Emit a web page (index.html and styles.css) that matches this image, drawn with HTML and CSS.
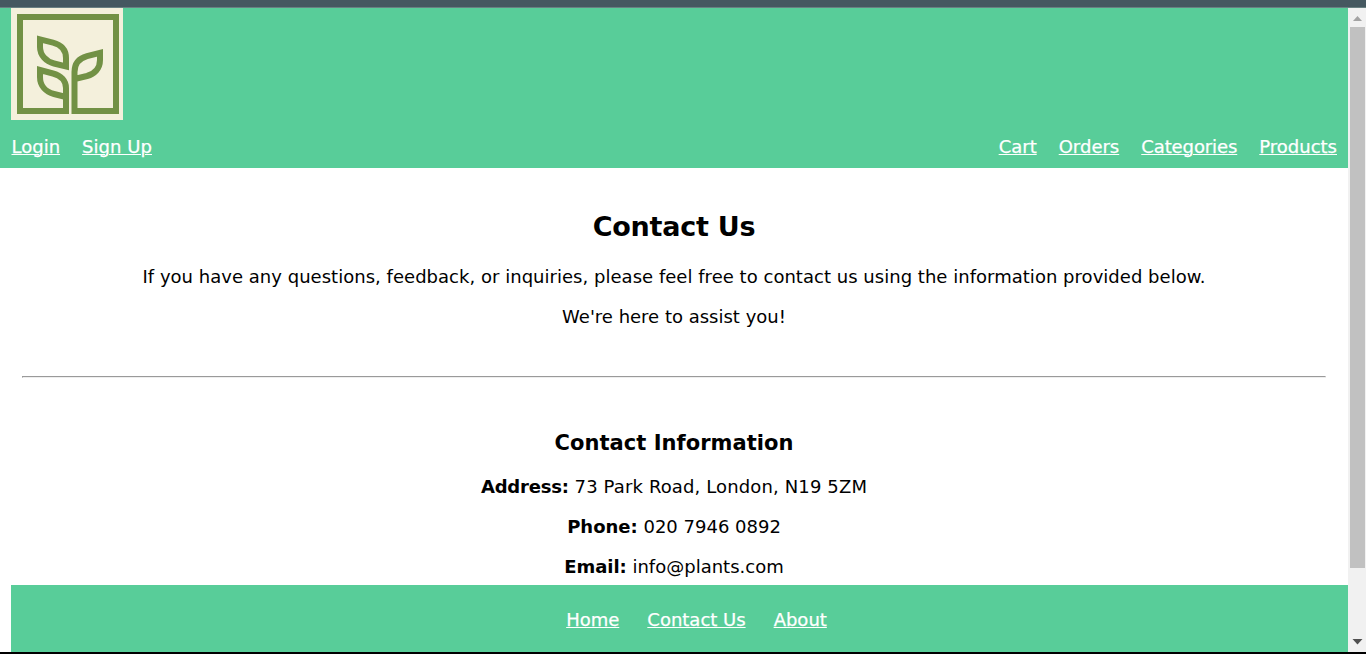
FILE: index.html
```html
<!DOCTYPE html>
<html lang="en">
<head>
<meta charset="utf-8">
<title>Contact Us</title>
<link rel="stylesheet" href="styles.css">
</head>
<body>
<div class="topbar"></div>
<div class="window">
  <div class="page">
    <header class="header">
      <svg class="logo" viewBox="0 0 112 112" aria-label="Plants logo">
        <rect width="112" height="112" fill="#f4f0dc"/>
        <g fill="none" stroke="#729145" stroke-width="6">
          <path d="M55 89V103H9V9H105V103H63.500V64C63.500 55 68 50.500 76 48.200L89 44.800V52C89 61 83 66 76 68L63.500 71"/>
          <path d="M58 103H54"/>
          <path d="M55 106V80C55 73 50 67.500 42 65.500L29 62V69C29 78 35 84 43 86L55 89"/>
          <path d="M29 31.300L42 34.600C50 36.700 55 42 55 50V58.500L43 55.500C35 53.500 29 47 29 39Z"/>
        </g>
      </svg>
      <nav class="nav">
        <div class="links left"><a>Login</a><a class="signup">Sign Up</a></div>
        <div class="links"><a>Cart</a><a class="orders">Orders</a><a class="categories">Categories</a><a>Products</a></div>
      </nav>
    </header>
    <main class="main">
      <h2 class="title">Contact Us</h2>
      <p class="text intro">If you have any questions, feedback, or inquiries, please feel free to contact us using the information provided below.</p>
      <p class="text">We're here to assist you!</p>
      <hr class="rule">
      <h3 class="subtitle">Contact Information</h3>
      <p class="text address"><b>Address:</b> 73 Park Road, London, N19 5ZM</p>
      <p class="text"><b>Phone:</b> 020 7946 0892</p>
      <p class="text email"><b>Email:</b> info@plants.com</p>
    </main>
    <footer class="footer"><a>Home</a><a>Contact Us</a><a>About</a></footer>
  </div>
  <div class="scrollbar">
    <svg class="arrow" viewBox="0 0 18 19"><path d="M5 13H14L9.500 8Z" fill="#a3a3a3"/></svg>
    <div class="thumb"></div>
    <svg class="arrow arrow-down" viewBox="0 0 18 19"><path d="M4.500 6H14.500L9.500 11.500Z" fill="#505050"/></svg>
  </div>
</div>
<div class="bottombar"></div>
</body>
</html>
```
FILE: styles.css
```css
* { box-sizing: border-box; }
body { margin: 0; height: 654px; overflow: hidden; display: flex; flex-direction: column; background: #fff; color: #000; font: 18px/22px Verdana, "DejaVu Sans", sans-serif; }
.topbar { height: 8px; flex: none; background: #455860; border-bottom: 1px solid #698082; }
.window { height: 644px; display: flex; }
.bottombar { height: 2px; background: #000; }
.page { width: 1348px; display: flex; flex-direction: column; }
.header { height: 160px; background: #58cd99; padding: 0 11px; }
.logo { display: block; width: 112px; height: 112px; }
.nav { display: flex; justify-content: space-between; padding-top: 16px; }
.links { display: flex; gap: 22px; }
.left { padding-left: 0.5px; }
.signup { letter-spacing: 0.05px; }
.categories { letter-spacing: -0.1px; }
a { color: #fff; text-decoration: underline; text-decoration-thickness: 1px; text-underline-offset: 1px; white-space: nowrap; -webkit-text-stroke: 0.25px #fff; }
.main { height: 417px; padding: 42px 22px 0; text-align: center; }
.title { margin: 0 0 23px; font-size: 27px; line-height: 33px; letter-spacing: -0.25px; }
.text { margin: 0 0 18px; white-space: nowrap; }
.intro { letter-spacing: 0.026px; }
.rule { margin: 48px 0 52px; }
.subtitle { margin: 0 0 20px; font-size: 21px; line-height: 26px; letter-spacing: 0.05px; }
.address { letter-spacing: 0.13px; }
.address b { letter-spacing: -0.2px; }
.email b { letter-spacing: -0.05px; }
.footer { flex: 1; margin-left: 11px; padding: 24px 0 0 34px; background: #58cd99; display: flex; justify-content: center; gap: 28px; }
.scrollbar { width: 18px; background: #f1f1f1; display: flex; flex-direction: column; }
.arrow { display: block; width: 18px; height: 19px; }
.thumb { width: 15px; height: 541px; margin-left: 2px; background: #c1c1c1; }
.arrow-down { margin-top: auto; }
```
